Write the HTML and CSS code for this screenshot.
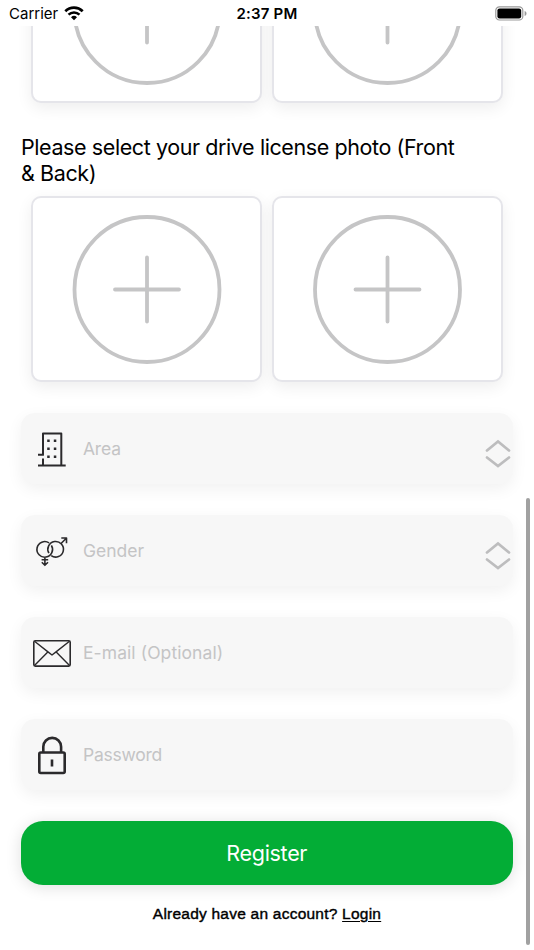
FILE: index.html
```
<!DOCTYPE html>
<html lang="en">
<head>
  <meta charset="UTF-8" />
  <meta name="viewport" content="width=device-width, initial-scale=1" />
  <title>Register</title>
  <link rel="stylesheet" href="styles.css">
</head>
<body>
  <header class="status-bar">
    <div class="carrier">
      <span class="carrier-name">Carrier</span>
      <svg class="wifi" viewBox="0 0 20 15" width="20" height="15">
        <path d="M1.3 5.2a12.6 12.6 0 0 1 17.4 0" fill="none" stroke="#000" stroke-width="2.7" />
        <path d="M4.5 8.6a8 8 0 0 1 11 0" fill="none" stroke="#000" stroke-width="2.5" />
        <path d="M10 14.3 7 11.3a4.3 4.3 0 0 1 6 0z" />
      </svg>
    </div>
    <div class="time">2:37 PM</div>
    <svg class="battery" viewBox="0 0 32 15" width="32" height="15">
      <rect x=".8" y=".8" width="27" height="13.2" rx="3.6" fill="none" stroke="#999" stroke-width="1.2" />
      <rect x="2.4" y="2.4" width="23.8" height="10" rx="2.2" />
      <path d="M29.6 5v5c1.4-.6 1.9-1.4 1.9-2.5s-.5-1.9-1.9-2.5z" fill="#999" />
    </svg>
  </header>

  <main class="page">
    <div class="photos photos-top">
      <button class="photo" type="button" aria-label="Add front photo">
        <svg class="plus" viewBox="0 0 150 150"><circle cx="75" cy="74.5" r="72.5" /><path d="M75 42.5v64M43 74.5h64" /></svg>
      </button>
      <button class="photo" type="button" aria-label="Add back photo">
        <svg class="plus" viewBox="0 0 150 150"><circle cx="75.5" cy="74.5" r="72.5" /><path d="M75.5 42.5v64M43.500 74.5h64" /></svg>
      </button>
    </div>

    <h2 class="title">Please select your drive license photo (Front<br>&amp; Back)</h2>

    <div class="photos">
      <button class="photo" type="button" aria-label="Add license front">
        <svg class="plus" viewBox="0 0 150 150"><circle cx="75" cy="74.5" r="72.5" /><path d="M75 42.5v64M43 74.5h64" /></svg>
      </button>
      <button class="photo" type="button" aria-label="Add license back">
        <svg class="plus" viewBox="0 0 150 150"><circle cx="75.5" cy="74.5" r="72.5" /><path d="M75.5 42.5v64M43.500 74.5h64" /></svg>
      </button>
    </div>

    <form class="form">
      <div class="field">
        <svg class="icon" viewBox="0 0 40 40">
          <path d="M11 25.7V4.400h18.300v32M11 29.500v7M6 25.700h5.900M6 36.500h27.700" stroke-width="2" />
          <path class="dots" d="M15.200 11.800h2.500M21.800 11.800h2.500M15.200 19.800h2.500M21.800 19.800h2.500M15.200 27.800h2.500M21.800 27.800h2.500" />
        </svg>
        <span class="label area">Area</span>
        <svg class="arrows" viewBox="0 0 26 30"><path d="M2 11.500 13 2.500l11 9M2 18.500l11 8.500 11-8.500" /></svg>
      </div>

      <div class="field">
        <svg class="icon" viewBox="0 0 40 40">
          <path d="M17.100 11.900A7.800 7.800 0 1 0 19.400 14.300M20.500 18.300a7.800 7.800 0 0 1-1 3.800M20.400 17a7.800 7.800 0 0 1 0 2.600M16.900 22.200A7.800 7.800 0 1 1 19.200 24.700M28.800 12.800l5-5M29.300 7h5.200v5.200M12.900 26.100v8M9.600 28.700h6.600M9.800 31.300l3.100 3 3.100-3" stroke-width="1.600" />
        </svg>
        <span class="label gender">Gender</span>
        <svg class="arrows" viewBox="0 0 26 30"><path d="M2 11.500 13 2.500l11 9M2 18.500l11 8.500 11-8.500" /></svg>
      </div>

      <div class="field">
        <svg class="icon" viewBox="0 0 40 40">
          <rect x="1.8" y="7.7" width="36.4" height="25.4" rx="1.5" stroke-width="1.6" />
          <path d="M2.500 8.300 16.600 19.400 20 22l3.400-2.600L37.500 8.300M2.500 32.500 15.800 19M37.500 32.500 24.200 19" stroke-width="1.400" />
        </svg>
        <span class="label email">E-mail (Optional)</span>
      </div>

      <div class="field">
        <svg class="icon" viewBox="0 0 40 40">
          <rect x="7.3" y="17.5" width="25.4" height="20.5" rx="1.5" stroke-width="2.6" />
          <path d="M11.300 17.500v-5.700a8.900 8.900 0 0 1 17.800 0v5.700M20 24.500v7" stroke-width="2.600" />
        </svg>
        <span class="label password">Password</span>
      </div>

      <button class="register" type="button"><span>Register</span></button>
    </form>

    <p class="login">Already have an account? <a href="#">Login</a></p>
    <div class="scrollbar"></div>
  </main>
</body>
</html>
```
FILE: styles.css
```
* {
  box-sizing: border-box;
}
body {
  margin: 0;
  width: 534px;
  height: 950px;
  overflow: hidden;
  background: #fff;
  color: #000;
  font-family: Inter, "Liberation Sans", sans-serif;
}
button {
  font-family: inherit;
  cursor: pointer;
}
.status-bar {
  display: grid;
  grid-template-columns: 1fr auto 1fr;
  align-items: center;
  height: 26px;
  padding: 1px 7px 0 9px;
  font-size: 15px;
}
.carrier {
  display: flex;
  align-items: center;
  gap: 6px;
}
.wifi {
  margin-top: -1px;
}
.time {
  margin: 0 1px 0 -1px;
  font-weight: 600;
  letter-spacing: 0.2px;
}
.battery {
  justify-self: end;
}
.page {
  position: relative;
  height: 924px;
  overflow: hidden;
}
.photos {
  display: flex;
  gap: 10px;
  padding-left: 31.4px;
}
.photos-top {
  margin-top: -109px;
}
.photo {
  display: flex;
  align-items: center;
  justify-content: center;
  width: 230.6px;
  height: 186px;
  padding: 1px 0 0;
  background: #fff;
  border: 2px solid #e5e5ea;
  border-radius: 10px;
  box-shadow: 0 5px 16px rgba(0, 0, 0, 0.07);
}
.plus {
  width: 150px;
  height: 150px;
  fill: none;
  stroke: #c5c5c6;
  stroke-width: 3.8px;
  stroke-linecap: round;
}
.title {
  margin: 31px 0 10px 21px;
  font-size: 21.5px;
  line-height: 26px;
  font-weight: 400;
  letter-spacing: -0.41px;
  white-space: nowrap;
}
.form {
  display: flex;
  flex-direction: column;
  gap: 31px;
  margin: 31px 21px 0 20.5px;
}
.field {
  display: flex;
  align-items: center;
  height: 71px;
  padding: 0 2px 0 11.5px;
  background: #f7f7f7;
  border-radius: 14px;
  box-shadow: 0 5px 16px rgba(0, 0, 0, 0.06);
}
.icon {
  width: 40px;
  height: 40px;
  fill: none;
  stroke: #2b2a2c;
  stroke-linejoin: round;
}
.icon .dots {
  stroke-width: 2.5px;
}
.label {
  flex: 1;
  margin-left: 11px;
  font-size: 17.5px;
  color: #c4c4c5;
}
.area {
  letter-spacing: -0.2px;
}
.email {
  letter-spacing: 0.08px;
}
.password {
  letter-spacing: -0.25px;
}
.arrows {
  width: 26px;
  height: 30px;
  margin-top: 11px;
  fill: none;
  stroke: #bdbdbe;
  stroke-width: 2.7px;
  stroke-linecap: round;
}
.register {
  height: 64px;
  background: #03ad36;
  border: none;
  border-radius: 22px;
  color: #fff;
  font-size: 21.5px;
  letter-spacing: -0.3px;
  box-shadow: 0 2px 16px rgba(0, 0, 0, 0.13);
}
.login {
  margin: 19px 0 0;
  font-family: "Liberation Sans", sans-serif;
  font-size: 15.5px;
  line-height: 20px;
  letter-spacing: 0.23px;
  text-align: center;
  -webkit-text-stroke: 0.4px #000;
}
.login a {
  color: inherit;
  text-underline-offset: 2px;
}
.scrollbar {
  position: absolute;
  top: 472px;
  right: 4px;
  width: 4px;
  height: 447px;
  border-radius: 2px;
  background: #a1a1a1;
}
```
